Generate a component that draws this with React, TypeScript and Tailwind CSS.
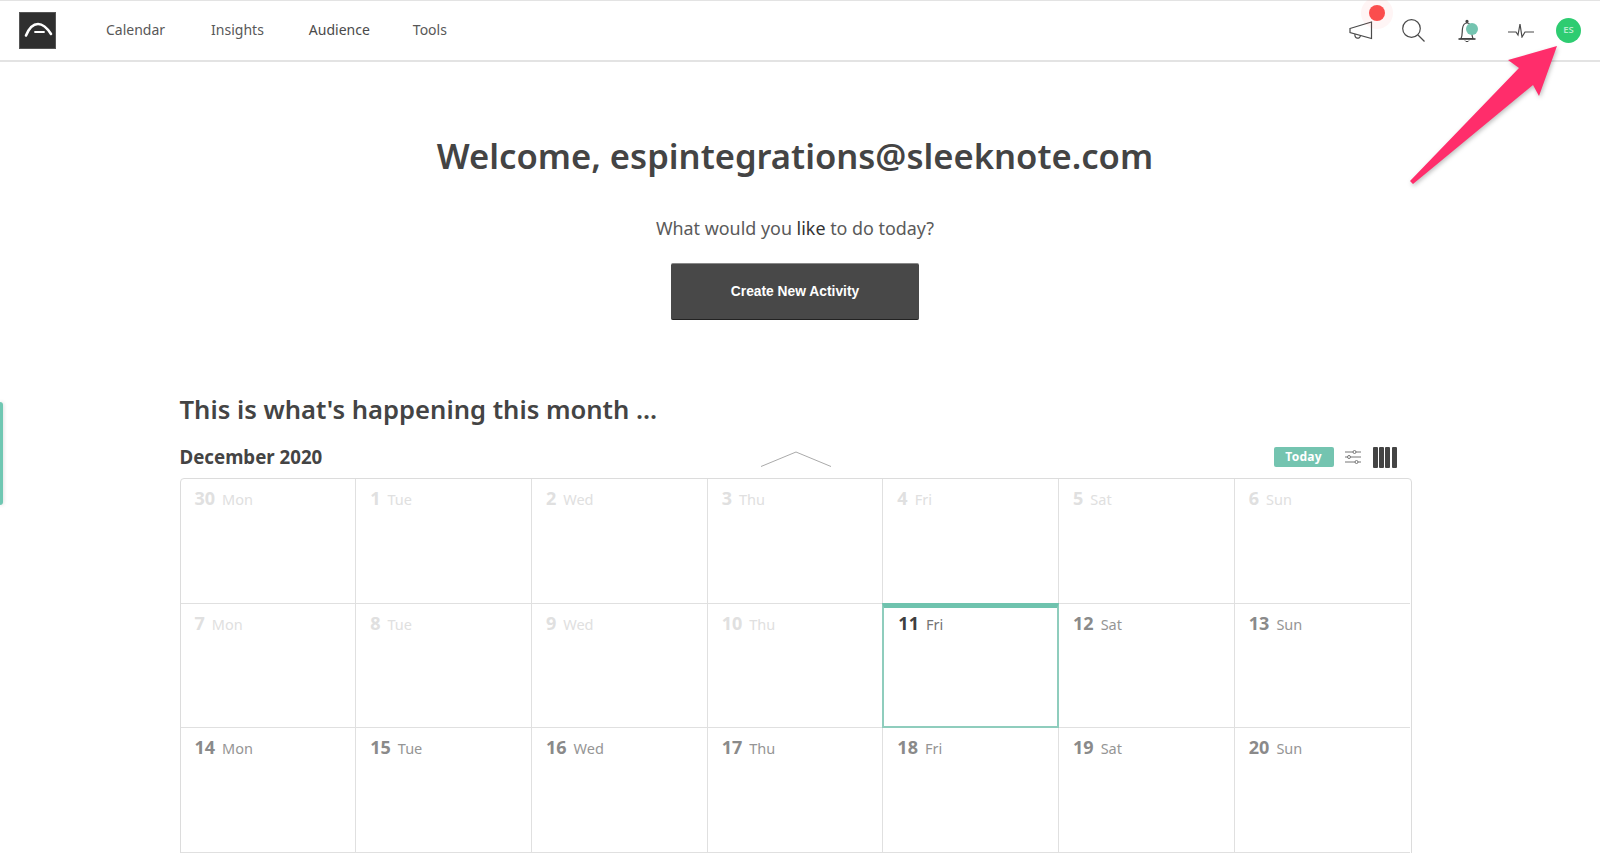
import React from 'react';

const noto = 'font-["Noto_Sans",sans-serif]';

type Day = { n: number; d: string; past?: boolean; today?: boolean };

const days: Day[] = [
  { n: 30, d: 'Mon', past: true },
  { n: 1, d: 'Tue', past: true },
  { n: 2, d: 'Wed', past: true },
  { n: 3, d: 'Thu', past: true },
  { n: 4, d: 'Fri', past: true },
  { n: 5, d: 'Sat', past: true },
  { n: 6, d: 'Sun', past: true },
  { n: 7, d: 'Mon', past: true },
  { n: 8, d: 'Tue', past: true },
  { n: 9, d: 'Wed', past: true },
  { n: 10, d: 'Thu', past: true },
  { n: 11, d: 'Fri', today: true },
  { n: 12, d: 'Sat' },
  { n: 13, d: 'Sun' },
  { n: 14, d: 'Mon' },
  { n: 15, d: 'Tue' },
  { n: 16, d: 'Wed' },
  { n: 17, d: 'Thu' },
  { n: 18, d: 'Fri' },
  { n: 19, d: 'Sat' },
  { n: 20, d: 'Sun' },
];

const DayCell: React.FC<{ day: Day; index: number }> = ({ day, index }) => {
  const numColor = day.past ? 'text-[#e0e0e0]' : day.today ? 'text-[#3f3f3f]' : 'text-[#8a8a8a]';
  const nameColor = day.past ? 'text-[#e0e0e0]' : day.today ? 'text-[#757575]' : 'text-[#959595]';
  const edge = (index + 1) % 7 === 0 ? '' : 'border-r';
  return (
    <div className={`relative h-[124.5px] border-b border-[#e0e0e0] ${edge}`}>
      {day.today && (
        <div className="absolute -left-px -top-px -right-px bottom-[-1px] border-2 border-[#8fcdbd] border-t-[5px] border-t-[#6fc3ae]" />
      )}
      <div className={`relative flex items-baseline gap-[7px] pt-[6px] ${day.today ? 'pl-[15px]' : 'pl-[14px]'}`}>
        <span className={`text-[18px] font-bold ${numColor}`}>{day.n}</span>
        <span className={`text-[14.5px] ${nameColor}`}>{day.d}</span>
      </div>
    </div>
  );
};

const Megaphone = () => (
  <svg className="block" width="24" height="19" viewBox="0 0 24 19" fill="none" stroke="#4a4a4a" strokeWidth="1.2">
    <path d="M1 7.5 L22.5 1 V17.5 L1 11.5 Z" />
    <path d="M6 13 C5 18 11 18.5 11.5 14.5" />
  </svg>
);

const Search = () => (
  <svg className="block" width="23" height="23" viewBox="0 0 23 23" fill="none" stroke="#4a4a4a" strokeWidth="1.2">
    <circle cx="9.5" cy="9.5" r="8.8" />
    <path d="M16 16 L22.5 22.5" />
  </svg>
);

const Bell = () => (
  <svg className="block" width="20" height="24" viewBox="0 0 20 24" fill="none" stroke="#444" strokeWidth="1.2">
    <path d="M3 19.5 C4.6 17 4 13 4.5 9.5 C5 6 7 4 9 4 C11 4 13 6 13.5 9.5 C14 13 13.5 17 15 19.5 Z" />
    <path d="M0.5 20 H17.5" strokeWidth="1.7" />
    <path d="M7 21.5 C7.5 23 10.5 23 11 21.5" strokeWidth="1" />
    <circle cx="9" cy="2.4" r="1" fill="#444" />
    <circle cx="14" cy="10" r="6" fill="#74c4b0" stroke="none" />
  </svg>
);

const Pulse = () => (
  <svg className="block" width="26" height="15" viewBox="0 0 26 15" fill="none" stroke="#4a4a4a" strokeWidth="1.2">
    <path d="M0 9 H8 L10 12 L12 1 L14 14 L17 9 H26" />
  </svg>
);

const Sliders = () => (
  <svg className="block" width="16" height="14" viewBox="0 0 16 14" fill="none" stroke="#777" strokeWidth="1">
    <path d="M0 2 H16 M0 7 H16 M0 12 H16" />
    <circle cx="9.5" cy="2" r="1.5" fill="#fff" />
    <circle cx="4" cy="7" r="1.5" fill="#fff" />
    <circle cx="11.5" cy="12" r="1.5" fill="#fff" />
  </svg>
);

export default function App() {
  return (
    <div className={`relative h-[853px] overflow-hidden bg-white ${noto}`}>
      <header className="flex h-[62px] items-center justify-between border-t border-b-2 border-[#e3e3e3] pl-[19px] pr-[19px]">
        <div className="flex items-center">
          <div className="flex h-[37px] w-[37px] items-center justify-center border border-[#555] bg-[#2f2f2f]">
            <svg className="block" width="35" height="35" viewBox="0 0 35 35" fill="none" stroke="#fff" strokeLinecap="round">
              <path d="M6 22.5 C9.5 14 13.5 11 18 11 C22.5 11 26.5 14 31 21" strokeWidth="2.6" />
              <path d="M15 19 H24" strokeWidth="1.8" />
            </svg>
          </div>
          <nav className="mb-[2px] ml-[50px] flex gap-[46px] text-[14px] text-[#585858]">
            <span>Calendar</span>
            <span>Insights</span>
            <span className="-ml-[1px] text-[#4a4a4a]">Audience</span>
            <span className="-ml-[3px]">Tools</span>
          </nav>
        </div>
        <div className="flex items-center">
          <div className="relative mr-[29px]">
            <Megaphone />
            <span className="absolute left-[20px] top-[-16px] h-[16px] w-[16px] rounded-full bg-[#fb4d4d] shadow-[0_0_0_8px_rgba(251,77,77,0.06)]" />
          </div>
          <div className="mr-[33px]">
            <Search />
          </div>
          <div className="mr-[30px]">
            <Bell />
          </div>
          <div className="mr-[22px]">
            <Pulse />
          </div>
          <div className="flex h-[25px] w-[25px] items-center justify-center rounded-full bg-[#2ecc71] text-[9.5px] font-semibold text-[#b6ecd0]">
            ES
          </div>
        </div>
      </header>

      <main className="flex flex-col items-center pr-[10px]">
        <h1 className="mt-[70px] text-[34.6px] font-semibold leading-[48px] text-[#444]">
          Welcome, espintegrations@sleeknote.com
        </h1>
        <p className="mt-[35px] text-[17.9px] leading-[26px] text-[#5a5a5a]">
          What would you <span className="text-[#333]">like</span> to do today?
        </p>
        <button className='mt-[22px] h-[57px] w-[248px] rounded-[2px] border-t border-b border-t-[#888] border-b-[#222] bg-[#484848] pt-[2px] font-["Liberation_Sans",sans-serif] text-[13.8px] font-bold text-white'>
          Create New Activity
        </button>

        <section className="ml-[1px] mt-[72px] w-[1232px]">
          <h2 className="text-[25.6px] font-semibold leading-[36px] text-[#444]">This is what's happening this month ...</h2>
          <div className="relative mt-[16px] flex h-[26px] items-center justify-between">
            <span className="text-[18.7px] font-bold text-[#444]">December 2020</span>
            <svg className="absolute left-[580px] top-[7px]" width="72" height="16" viewBox="0 0 72 16" fill="none" stroke="#aaa">
              <path d="M1 15.5 L36 1 L71 15.5" />
            </svg>
            <div className="mr-[15px] flex items-center">
              <span className="flex h-[20px] w-[60px] items-center justify-center rounded-[2px] bg-[#74c4b0] text-[12px] font-bold tracking-[0.3px] text-white">
                Today
              </span>
              <span className="ml-[11px] flex">
                <Sliders />
              </span>
              <span className="ml-[12px] flex gap-[1.3px]">
                <i className="block h-[21px] w-[5px] rounded-[1px] bg-[#444]" />
                <i className="block h-[21px] w-[5px] rounded-[1px] bg-[#444]" />
                <i className="block h-[21px] w-[5px] rounded-[1px] bg-[#444]" />
                <i className="block h-[21px] w-[5px] rounded-[1px] bg-[#444]" />
              </span>
            </div>
          </div>
          <div className="mt-[8px] grid grid-cols-7 rounded-t-[4px] border border-[#dcdcdc]">
            {days.map((day, i) => (
              <DayCell key={i} day={day} index={i} />
            ))}
          </div>
        </section>
      </main>

      {/* teal tab on the left edge */}
      <div className="absolute left-0 top-[402px] h-[103px] w-[3px] rounded-r-[3px] bg-[#6fc7b2] shadow-[0_0_4px_rgba(0,0,0,0.2)]" />

      {/* annotation arrow */}
      <svg className="absolute left-0 top-0 drop-shadow-[1px_2px_2px_rgba(0,0,0,0.25)]" width="1600" height="200" viewBox="0 0 1600 200">
        <path d="M1557 46 L1508 60 L1519 68 L1410 181 L1413 184 L1533 85 L1539 96 Z" fill="#ff2d6b" />
      </svg>
    </div>
  );
}
